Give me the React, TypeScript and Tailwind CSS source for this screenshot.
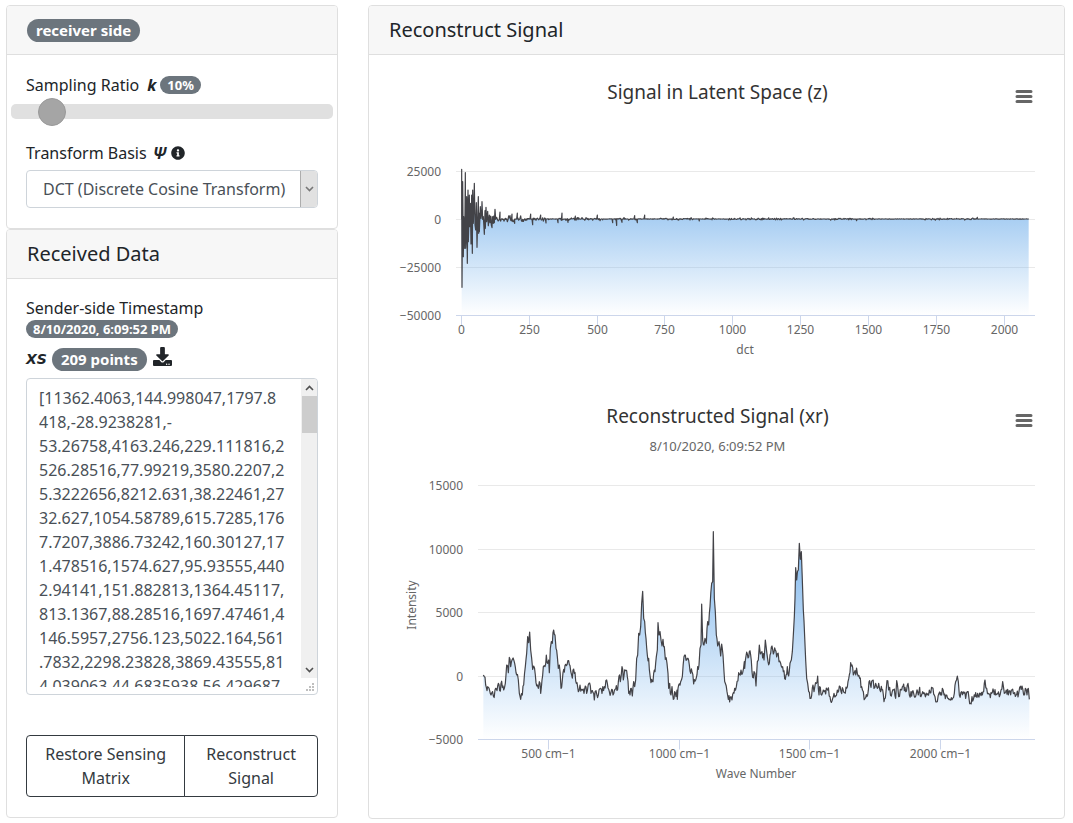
import { useState } from "react";
import type { ReactNode } from "react";
import { FaDownload, FaInfoCircle } from "react-icons/fa";

type Point = [number, number];

const measurements = [
  "[11362.4063,144.998047,1797.8",
  "418,-28.9238281,-",
  "53.26758,4163.246,229.111816,2",
  "526.28516,77.99219,3580.2207,2",
  "5.3222656,8212.631,38.22461,27",
  "32.627,1054.58789,615.7285,176",
  "7.7207,3886.73242,160.30127,17",
  "1.478516,1574.627,95.93555,440",
  "2.94141,151.882813,1364.45117,",
  "813.1367,88.28516,1697.47461,4",
  "146.5957,2756.123,5022.164,561",
  ".7832,2298.23828,3869.43555,81",
  "4.039063,44.6835938,56.429687",
].join("\n");

function noise(seed: number) {
  const v = Math.sin(seed * 12.9898) * 43758.5453;
  return (v - Math.floor(v)) * 2 - 1;
}

function parse(source: string): Point[] {
  return source
    .trim()
    .split(/\s+/)
    .map((pair) => pair.split(",").map(Number) as Point);
}

function toPath(points: Point[]) {
  return points.map(([x, y], i) => `${i ? "L" : "M"}${x.toFixed(2)} ${y.toFixed(2)}`).join("");
}

const latentHead = parse(`
290,658 290,508 291,862 293,545 295,770 296,650 298,745 300,640 301,518 302,745 304,700 305,590 306,700 307,790
309,570 310,725 311,690 313,585 314,680 316,610 318,732 320,585 322,760 323,570 325,670 327,600 328,550 330,675
332,690 334,608 336,742 338,660 340,590 341,700 343,640 343,695 346,620 348,655 350,640 351,605 353,658 355,650
358,703 360,632 361,685 363,622 365,665 366,655 368,634 370,677 373,645 375,668 377,648 379,675 381,683 382,650
385,670 386,648 388,668 390,628 392,658`);

const latentSpikes: Record<number, number> = {
  405: 636, 441: 642, 457: 639, 450: 670, 497: 642, 504: 674, 527: 645, 544: 669, 580: 668, 591: 639,
  610: 667, 631: 648, 697: 645, 743: 668, 756: 676, 772: 667, 809: 647, 817: 668, 839: 645, 925: 651,
  1003: 663, 1475: 662, 1837: 652,
};

function buildLatent(): Point[] {
  const tail: Point[] = [];
  for (let x = 395; x <= 1992; x += 2) {
    const reach = x < 480 ? 13 : x < 560 ? 9 : x < 850 ? 6 : 4;
    const burst = noise(Math.floor(x / 34) + 3) > -0.35 ? 1 : 0.2;
    const spike = latentSpikes[x] ?? latentSpikes[x + 1];
    tail.push([x, spike ?? 657 + noise(x) * Math.abs(noise(x + 0.7)) * reach * burst]);
    if (spike) tail.push([x, 657]);
  }
  return [...latentHead, ...tail].map(([x, y]) => [(x - 12) / 3, (y - 315) / 3]);
}

const spectrumSamples = parse(`
355,825 358,830 362,855 366,872 370,862 374,872 378,885 385,888 390,870 396,872 400,850 404,872 408,850 412,862
418,865 421,850 425,795 428,798 430,818 433,772 437,800 442,778 449,790 455,825 460,840 463,880 467,898 472,885
476,855 481,800 485,760 488,710 491,728 494,696 497,750 500,775 503,808 506,798 511,825 517,855 520,865 523,845
527,880 531,840 535,800 540,800 544,765 548,790 551,780 553,818 556,745 559,725 562,730 566,690 570,705 573,745
577,770 580,805 583,795 588,865 592,840 596,808 604,797 611,782 615,797 620,825 628,820 634,850 640,875 645,855
650,868 657,880 661,858 665,880 672,850 678,880 684,878 688,900 693,872 700,885 707,865 711,880 718,860 725,840
733,875 740,868 744,885 750,868 758,868 762,828 766,845 771,800 775,840 781,812 787,830 791,880 795,885 799,865
802,888 806,845 809,860 812,840 815,775 818,765 821,700 824,705 827,680 830,610 833,574 836,655 839,665 843,715
847,765 851,775 853,808 858,848 862,845 868,810 870,815 874,770 877,750 879,668 882,705 885,695 888,720 891,738
894,718 898,740 901,778 906,790 909,820 911,865 914,850 918,885 921,860 925,898 929,875 933,890 936,870 937,898
941,855 947,845 952,830 957,770 961,765 967,775 973,795 977,820 981,815 986,852 992,840 998,800 1002,795 1005,745
1008,735 1010,612 1013,720 1017,735 1020,715 1024,730 1028,665 1031,675 1035,620 1040,550 1043,545 1045,395
1048,595 1051,635 1054,705 1058,738 1062,725 1067,768 1070,732 1074,765 1077,815 1081,850 1086,875 1094,906
1098,890 1101,900 1109,865 1114,860 1121,818 1128,810 1133,818 1138,785 1139,805 1143,768 1153,755 1157,765
1161,815 1163,832 1167,815 1170,820 1173,858 1177,785 1180,780 1183,735 1186,762 1191,755 1197,780 1201,720
1205,755 1209,785 1213,790 1217,760 1221,738 1225,762 1231,750 1237,762 1242,785 1247,790 1255,815 1261,838
1267,800 1271,828 1275,790 1279,780 1282,755 1285,705 1288,650 1290,595 1292,503 1295,540 1300,510 1303,430
1306,478 1309,455 1312,540 1315,630 1319,710 1322,780 1325,835 1328,850 1331,875 1335,895 1338,895 1344,855
1347,875 1354,850 1358,828 1362,885 1366,862 1370,885 1375,870 1382,882 1388,870 1395,890 1401,903 1407,880
1412,888 1417,870 1423,858 1428,875 1434,868 1439,878 1445,865 1449,845 1453,825 1457,788 1461,795 1465,825
1470,812 1477,820 1484,835 1490,860 1495,875 1500,895 1508,885 1514,842 1518,862 1522,842 1527,865 1532,850
1537,865 1541,850 1547,875 1551,870 1557,905 1563,875 1566,842 1571,870 1574,862 1579,888 1586,870 1592,895
1595,842 1601,890 1606,868 1610,870 1616,852 1622,875 1629,850 1633,885 1638,875 1646,880 1654,880 1660,885
1664,862 1668,890 1673,875 1679,882 1686,885 1693,870 1704,865 1710,890 1717,905 1722,880 1726,885 1732,865
1737,885 1743,885 1750,895 1757,900 1763,895 1768,880 1772,845 1777,828 1780,845 1783,885 1790,875 1797,880
1802,895 1807,875 1812,895 1816,910 1821,890 1830,890 1838,880 1846,880 1852,885 1856,875 1860,840 1865,865
1870,880 1880,880 1886,875 1892,885 1898,882 1903,890 1908,870 1913,845 1918,880 1924,870 1930,885 1937,885
1945,880 1953,885 1961,880 1964,862 1971,858 1976,885 1981,865 1986,885 1990,865 1993,898`);

function buildSpectrum(): Point[] {
  const out: Point[] = [];
  spectrumSamples.forEach(([x, y], i) => {
    out.push([x, y]);
    const next = spectrumSamples[i + 1];
    if (!next) return;
    const steps = Math.floor((next[0] - x) / 2);
    for (let s = 1; s < steps; s++) {
      const t = s / steps;
      out.push([x + (next[0] - x) * t, y + (next[1] - y) * t + noise(x + s * 1.37) * 14]);
    }
  });
  return out.map(([x, y]) => [(x - 12) / 3, (y - 159) / 3]);
}

const latent = buildLatent();
const spectrum = buildSpectrum();

type Tick = { at: number; label: string };

type ChartProps = {
  id: string;
  name: string;
  height: number;
  left: number;
  labelRight: number;
  rows: Tick[];
  columns: Tick[];
  points: Point[];
  xTitle: string;
  xTitleAt: number;
  yTitle?: string;
};

function AreaChart({ id, name, height, left, labelRight, rows, columns, points, xTitle, xTitleAt, yTitle }: ChartProps) {
  const right = 666;
  const base = rows[rows.length - 1].at;
  const line = toPath(points);
  const area = `${line}L${points[points.length - 1][0]} ${base}L${points[0][0]} ${base}Z`;
  return (
    <svg viewBox={`0 0 695 ${height}`} className="block h-auto w-full" role="img" aria-label={name}>
      <defs>
        <linearGradient id={id} x1="0" y1="0" x2="0" y2="1">
          <stop offset="0" stopColor="#7cb5ec" />
          <stop offset="1" stopColor="#7cb5ec" stopOpacity="0" />
        </linearGradient>
      </defs>
      {rows.slice(0, -1).map((row) => (
        <path key={row.label} d={`M${left} ${row.at}H${right}`} stroke="#e9e9e9" />
      ))}
      <path d={area} fill={`url(#${id})`} />
      <path d={line} fill="none" stroke="#434348" strokeWidth="1.2" strokeLinejoin="round" />
      <path d={`M${left} ${base}H${right}`} stroke="#ccd6eb" />
      {columns.map((column) => (
        <path key={column.label} d={`M${column.at} ${base}v10`} stroke="#ccd6eb" />
      ))}
      <g fill="#666666" className="text-[12px]">
        {rows.map((row) => (
          <text key={row.label} x={labelRight} y={row.at + 4} textAnchor="end">
            {row.label}
          </text>
        ))}
        {columns.map((column) => (
          <text key={column.label} x={column.at} y={base + 18} textAnchor="middle">
            {column.label}
          </text>
        ))}
        <text x={xTitleAt} y={base + 38} textAnchor="middle">
          {xTitle}
        </text>
        {yTitle && (
          <text transform="translate(47 152) rotate(-90)" textAnchor="middle">
            {yTitle}
          </text>
        )}
      </g>
    </svg>
  );
}

function ChartHeading({ title, subtitle }: { title: string; subtitle?: string }) {
  return (
    <div className="relative text-center">
      <h2 className="pb-0.5 pl-0.5 text-[19px] leading-[22px] text-[#333333]">{title}</h2>
      {subtitle && <p className="mt-2.5 pl-0.5 text-[13px] leading-[14px] text-[#666666]">{subtitle}</p>}
      <button type="button" aria-label="Chart context menu" className="absolute top-[3px] right-[27px] p-1">
        <svg width="18" height="16" viewBox="0 0 18 16" className="block">
          <path d="M2 3.5H16M2 8.5H16M2 13.5H16" stroke="#666666" strokeWidth="3" strokeLinecap="round" />
        </svg>
      </button>
    </div>
  );
}

function Card({ header, children }: { header: ReactNode; children: ReactNode }) {
  return (
    <section className="overflow-hidden rounded border border-[#dfdfdf] bg-white">
      <header className="flex h-[49px] items-center border-b border-[#dfdfdf] bg-[#f7f7f7] px-5">{header}</header>
      {children}
    </section>
  );
}

function Badge({ large, children }: { large?: boolean; children: ReactNode }) {
  return (
    <span
      className={
        large
          ? "inline-block rounded-full bg-[#6c757d] px-[9px] py-1 text-[15px] leading-[15px] font-bold text-white"
          : "inline-block rounded-full bg-[#6c757d] px-[7px] py-[3px] text-[13px] leading-3 font-bold text-white"
      }
    >
      {children}
    </span>
  );
}

function Chevron({ up, className }: { up?: boolean; className?: string }) {
  return (
    <svg width="9" height="6" viewBox="0 0 9 6" className={className} aria-hidden="true">
      <path d={up ? "M1 5L4.5 1.5L8 5" : "M1 1L4.5 4.5L8 1"} fill="none" stroke="currentColor" strokeWidth="1.6" />
    </svg>
  );
}

export default function App() {
  const [ratio, setRatio] = useState(10);
  return (
    <main className="grid grid-cols-[332fr_697fr] items-start gap-[30px] bg-white pt-[5px] pr-2 pb-1 pl-1.5 font-['Noto_Sans',sans-serif] text-[16px] leading-6 text-[#212529]">
      <div className="min-w-0">
        <Card header={<Badge large>receiver side</Badge>}>
          <div className="px-[19px] pt-[18px] pb-5">
            <label htmlFor="ratio" className="flex items-center">
              Sampling Ratio<b className="mr-1 ml-2 italic">k</b>
              <Badge>{ratio}%</Badge>
            </label>
            <input
              id="ratio"
              type="range"
              min={1}
              max={100}
              value={ratio}
              onChange={(e) => setRatio(Number(e.target.value))}
              className="-mx-[15px] mt-[7px] block h-[15px] w-[calc(100%+30px)] appearance-none rounded-[5px] bg-[#e0e0e0] outline-none [&::-webkit-slider-thumb]:size-7 [&::-webkit-slider-thumb]:appearance-none [&::-webkit-slider-thumb]:rounded-full [&::-webkit-slider-thumb]:border [&::-webkit-slider-thumb]:border-[#999999] [&::-webkit-slider-thumb]:bg-[#a5a5a5]"
            />
            <label htmlFor="basis" className="mt-[22px] flex items-center">
              Transform Basis<b className="mr-1 ml-1.5 italic">Ψ</b>
              <FaInfoCircle className="size-3.5" />
            </label>
            <div className="relative mt-[5px]">
              <select
                id="basis"
                defaultValue="dct"
                className="block h-[38px] w-full appearance-none rounded border border-[#ced4da] bg-white pr-5 pl-4 text-[#495057]"
              >
                <option value="dct">DCT (Discrete Cosine Transform)</option>
              </select>
              <span className="pointer-events-none absolute inset-y-px right-px flex w-[17px] items-center justify-center rounded-r-[3px] border-l border-[#adadad] bg-[#e1e1e1] text-[#777777]">
                <Chevron />
              </span>
            </div>
          </div>
        </Card>

        <Card header={<h2 className="text-[20px] leading-6">Received Data</h2>}>
          <div className="px-[19px] pt-[17px] pb-5">
            <p>Sender-side Timestamp</p>
            <div className="flex">
              <Badge>8/10/2020, 6:09:52 PM</Badge>
            </div>
            <div className="mt-[9px] flex items-center">
              <label htmlFor="samples" className="mr-[5px] font-['DejaVu_Sans',sans-serif] text-[14px] font-bold italic">
                XS
              </label>
              <Badge large>209 points</Badge>
              <button type="button" aria-label="Download samples" className="-mt-1.5 ml-1.5">
                <FaDownload className="size-[19px]" />
              </button>
            </div>
            <div className="relative mt-[7px] rounded border border-[#ced4da] py-[7px] pr-[17px] pl-3">
              <textarea
                id="samples"
                readOnly
                value={measurements}
                className="block h-[301px] w-full resize-none overflow-hidden whitespace-pre text-[#495057] outline-none"
              />
              <div className="absolute top-0 right-0 bottom-4 flex w-4 flex-col items-center justify-between rounded-tr bg-[#f0f0f0] text-[#505050]">
                <div className="flex h-[17px] items-center">
                  <Chevron up />
                </div>
                <div className="mb-auto h-[37px] w-[15px] bg-[#cdcdcd]" />
                <div className="flex h-[17px] items-center">
                  <Chevron />
                </div>
              </div>
              <svg className="absolute right-0.5 bottom-0.5" width="10" height="10" viewBox="0 0 10 10" aria-hidden="true">
                <path
                  d="M7 1h2v2h-2zM4 4h2v2h-2zM7 4h2v2h-2zM1 7h2v2h-2zM4 7h2v2h-2zM7 7h2v2h-2z"
                  fill="#bfbfbf"
                />
              </svg>
            </div>
            <div className="mt-10 grid grid-cols-[6fr_5fr] text-[#343a40]">
              <button type="button" className="rounded-l border border-[#343a40] px-3 py-1.5">
                Restore Sensing Matrix
              </button>
              <button type="button" className="-ml-px rounded-r border border-[#343a40] px-3 py-1.5">
                Reconstruct Signal
              </button>
            </div>
          </div>
        </Card>
      </div>

      <Card header={<h1 className="text-[20px] leading-6">Reconstruct Signal</h1>}>
        <div className="pt-[26px]">
          <ChartHeading title="Signal in Latent Space (z)" />
          <AreaChart
            id="latent-fill"
            name="Signal in Latent Space (z)"
            height={300}
            left={87}
            labelRight={72}
            rows={[
              { at: 66.5, label: "25000" },
              { at: 114.5, label: "0" },
              { at: 162.5, label: "−25000" },
              { at: 210.5, label: "−50000" },
            ]}
            columns={[
              { at: 92.5, label: "0" },
              { at: 160.5, label: "250" },
              { at: 228.5, label: "500" },
              { at: 295.5, label: "750" },
              { at: 363.5, label: "1000" },
              { at: 431.5, label: "1250" },
              { at: 499.5, label: "1500" },
              { at: 567.5, label: "1750" },
              { at: 635.5, label: "2000" },
            ]}
            points={latent}
            xTitle="dct"
            xTitleAt={376}
          />
          <ChartHeading title="Reconstructed Signal (xr)" subtitle="8/10/2020, 6:09:52 PM" />
          <AreaChart
            id="spectrum-fill"
            name="Reconstructed Signal (xr)"
            height={365}
            left={109}
            labelRight={94}
            rows={[
              { at: 32.5, label: "15000" },
              { at: 96.5, label: "10000" },
              { at: 159.5, label: "5000" },
              { at: 223.5, label: "0" },
              { at: 286.5, label: "−5000" },
            ]}
            columns={[
              { at: 179.5, label: "500 cm−1" },
              { at: 310.5, label: "1000 cm−1" },
              { at: 440.5, label: "1500 cm−1" },
              { at: 571.5, label: "2000 cm−1" },
            ]}
            points={spectrum}
            xTitle="Wave Number"
            xTitleAt={387}
            yTitle="Intensity"
          />
        </div>
      </Card>
    </main>
  );
}
